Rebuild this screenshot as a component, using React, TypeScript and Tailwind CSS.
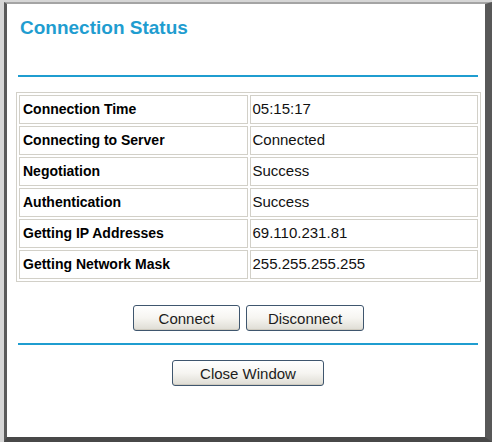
const rows: Array<[string, string]> = [
  ["Connection Time", "05:15:17"],
  ["Connecting to Server", "Connected"],
  ["Negotiation", "Success"],
  ["Authentication", "Success"],
  ["Getting IP Addresses", "69.110.231.81"],
  ["Getting Network Mask", "255.255.255.255"],
];

function XpButton({ label, width }: { label: string; width: string }) {
  return (
    <button
      type="button"
      className={`${width} h-[26px] rounded-[3px] border border-[#3f566e] bg-linear-to-b from-white via-[#f6f5f1] to-[#dedcd4] text-[15px] leading-none text-[#1c1c1c] shadow-[inset_0_-1px_0_#cfcbc0]`}
    >
      {label}
    </button>
  );
}

export default function App() {
  return (
    <div className="w-[492px] h-[442px] bg-[#d6d6d6] pt-[2px] pl-[4px] font-['Liberation_Sans',Arial,sans-serif]">
      <div className="h-[440px] w-[488px] border-t-[2px] border-t-[#a4a4a4] border-l-[3px] border-l-[#5a5a5a] border-r-[7px] border-r-[#585858] border-b-[5px] border-b-[#484848] bg-white">
        <div className="flex flex-col">
          <h1 className="ml-[13px] mt-[13px] h-[22px] text-[19px] font-bold leading-[22px] text-[#1f9dd0]">
            Connection Status
          </h1>

          <div className="ml-[11px] mt-[36px] h-[2px] w-[460px] bg-[#1f9dd0]" />

          <table className="ml-[9px] mt-[15px] w-[465px] table-fixed border-separate border-spacing-[2px] border border-[#d2d0c8]">
            <tbody>
              {rows.map(([label, value]) => (
                <tr key={label}>
                  <td className="h-[29px] border border-[#d2d0c8] px-[3px] align-middle text-[14px] font-bold text-black">
                    {label}
                  </td>
                  <td className="h-[29px] border border-[#d2d0c8] px-[2px] align-middle text-[15px] text-[#111]">
                    {value}
                  </td>
                </tr>
              ))}
            </tbody>
          </table>

          <div className="ml-[126px] mt-[23px] flex gap-[6px]">
            <XpButton label="Connect" width="w-[107px]" />
            <XpButton label="Disconnect" width="w-[118px]" />
          </div>

          <div className="ml-[11px] mt-[12px] h-[2px] w-[460px] bg-[#1f9dd0]" />

          <div className="ml-[165px] mt-[15px] flex">
            <XpButton label="Close Window" width="w-[152px]" />
          </div>
        </div>
      </div>
    </div>
  );
}
